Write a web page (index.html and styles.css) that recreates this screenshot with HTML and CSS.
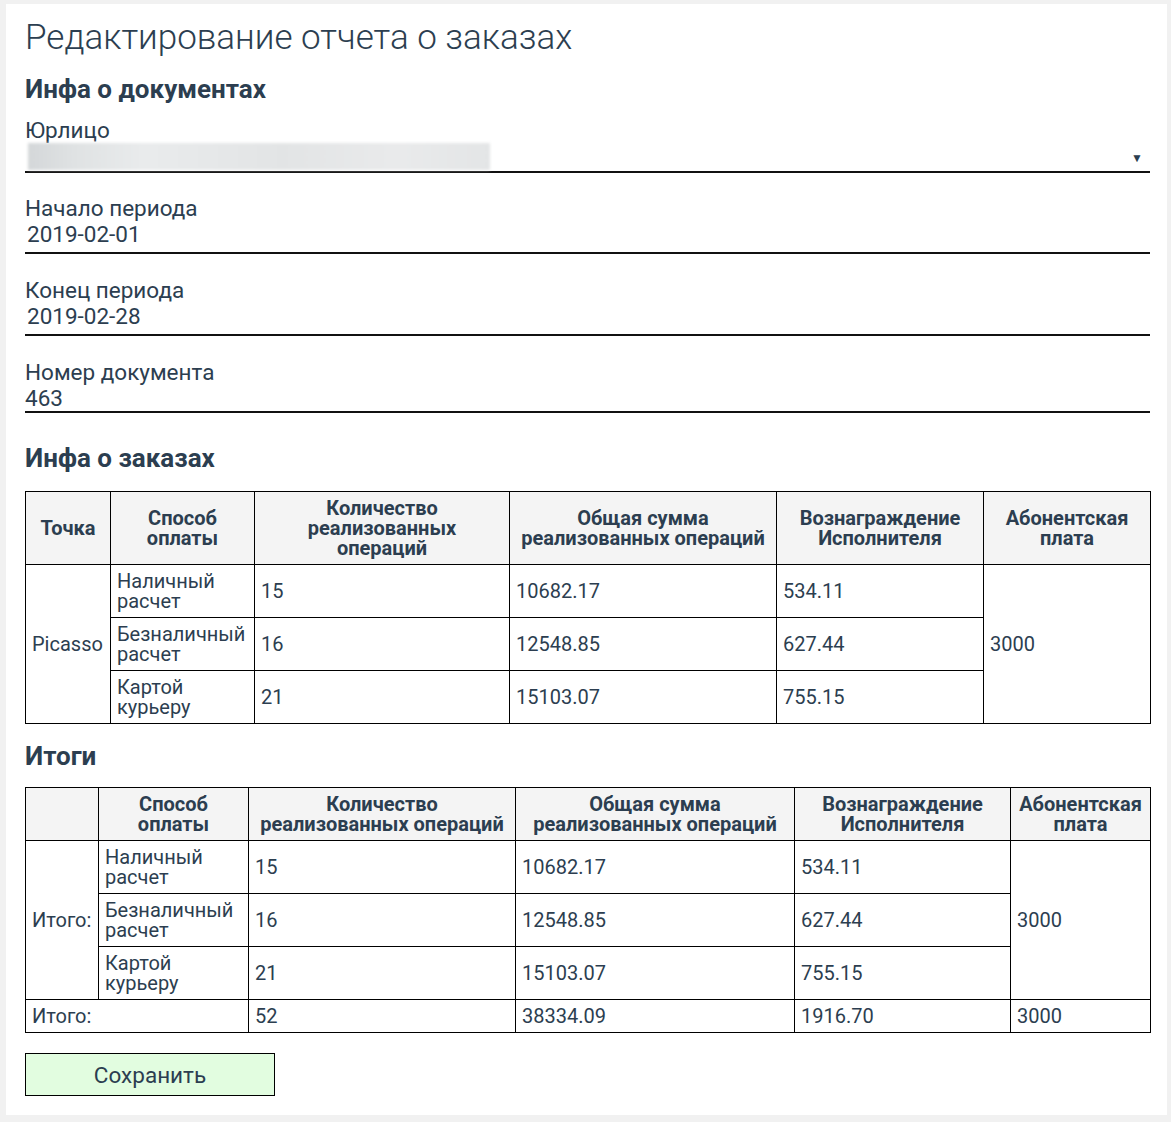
FILE: index.html
```html
<!DOCTYPE html>
<html lang="ru">
<head>
<meta charset="utf-8">
<title>Редактирование отчета о заказах</title>
<link rel="stylesheet" href="styles.css">
</head>
<body>
<div class="page">
  <h1 class="title">Редактирование отчета о заказах</h1>
  <h3 class="section section-docs">Инфа о документах</h3>

  <div class="field field-select">
    <div class="label">Юрлицо</div>
    <div class="select">
      <span class="blur"></span>
      <span class="arrow">▼</span>
    </div>
  </div>

  <div class="field field-start">
    <div class="label">Начало периода</div>
    <div class="input date">2019-02-01</div>
  </div>

  <div class="field field-end">
    <div class="label">Конец периода</div>
    <div class="input date">2019-02-28</div>
  </div>

  <div class="field field-number">
    <div class="label">Номер документа</div>
    <div class="input number">463</div>
  </div>

  <h3 class="section section-orders">Инфа о заказах</h3>
  <table class="grid">
    <colgroup>
      <col class="c1a"><col class="c1b"><col class="c1c"><col class="c1d"><col class="c1e"><col class="c1f">
    </colgroup>
    <thead>
      <tr>
        <th>Точка</th>
        <th>Способ оплаты</th>
        <th>Количество реализованных операций</th>
        <th>Общая сумма реализованных операций</th>
        <th>Вознаграждение Исполнителя</th>
        <th>Абонентская плата</th>
      </tr>
    </thead>
    <tbody>
      <tr>
        <td rowspan="3">Picasso</td>
        <td>Наличный расчет</td>
        <td>15</td>
        <td>10682.17</td>
        <td>534.11</td>
        <td rowspan="3">3000</td>
      </tr>
      <tr>
        <td>Безналичный расчет</td>
        <td>16</td>
        <td>12548.85</td>
        <td>627.44</td>
      </tr>
      <tr>
        <td>Картой курьеру</td>
        <td>21</td>
        <td>15103.07</td>
        <td>755.15</td>
      </tr>
    </tbody>
  </table>

  <h3 class="section section-totals">Итоги</h3>
  <table class="grid">
    <colgroup>
      <col class="c2a"><col class="c2b"><col class="c2c"><col class="c2d"><col class="c2e"><col class="c2f">
    </colgroup>
    <thead>
      <tr>
        <th></th>
        <th>Способ оплаты</th>
        <th>Количество реализованных операций</th>
        <th>Общая сумма реализованных операций</th>
        <th>Вознаграждение Исполнителя</th>
        <th>Абонентская плата</th>
      </tr>
    </thead>
    <tbody>
      <tr>
        <td rowspan="3">Итого:</td>
        <td>Наличный расчет</td>
        <td>15</td>
        <td>10682.17</td>
        <td>534.11</td>
        <td rowspan="3">3000</td>
      </tr>
      <tr>
        <td>Безналичный расчет</td>
        <td>16</td>
        <td>12548.85</td>
        <td>627.44</td>
      </tr>
      <tr>
        <td>Картой курьеру</td>
        <td>21</td>
        <td>15103.07</td>
        <td>755.15</td>
      </tr>
      <tr>
        <td colspan="2">Итого:</td>
        <td>52</td>
        <td>38334.09</td>
        <td>1916.70</td>
        <td>3000</td>
      </tr>
    </tbody>
  </table>

  <button class="save" type="button">Сохранить</button>
</div>
</body>
</html>
```

FILE: styles.css
```css
html, body {
  margin: 0;
  padding: 0;
}

body {
  background: #f1f1f1;
  font-family: Roboto, "Noto Sans", "Liberation Sans", sans-serif;
  color: #2c3e50;
  padding: 4px 4px 8px 6px;
}

.page {
  background: #ffffff;
  padding: 14px 17px 19px 19px;
}

.title {
  font-weight: 300;
  font-size: 35px;
  line-height: 40px;
  margin: 0;
}

.section {
  font-weight: 700;
  font-size: 26px;
  line-height: 30px;
  margin: 0;
}

.section-docs {
  margin-top: 16px;
}

.section-orders {
  margin-top: 30px;
  margin-bottom: 18px;
}

.section-totals {
  margin-top: 17px;
  margin-bottom: 16px;
}

.field-select { margin-top: 13px; }
.field-start { margin-top: 22px; }
.field-end { margin-top: 23px; }
.field-number { margin-top: 23px; }

.label {
  font-size: 22.5px;
  line-height: 26px;
}

.input {
  font-size: 22.5px;
  line-height: 26px;
  border-bottom: 2px solid #111;
}

.input.date {
  padding-left: 2px;
  padding-bottom: 5px;
}

.input.number {
  padding-bottom: 0;
}

.select {
  position: relative;
  height: 28px;
  border-bottom: 2px solid #111;
}

.blur {
  position: absolute;
  left: 3px;
  top: 0;
  width: 462px;
  height: 27px;
  background: linear-gradient(90deg, #d4d7d9 0%, #dfe2e3 10%, #e9ebec 25%, #e2e4e5 55%, #e9eaeb 80%, #e3e5e6 100%);
  filter: blur(1.5px);
}

.arrow {
  position: absolute;
  right: 7px;
  top: 9px;
  font-size: 12px;
  line-height: 12px;
  color: #2c3e50;
}

.grid {
  width: 100%;
  table-layout: fixed;
  border-collapse: collapse;
  font-size: 20px;
  line-height: 20px;
}

.grid th,
.grid td {
  border: 1px solid #000;
  padding: 6px;
  vertical-align: middle;
}

.grid th {
  background: #f4f4f4;
  font-weight: 700;
  text-align: center;
}

.grid td {
  text-align: left;
}

.c1a { width: 85px; }
.c1b { width: 144px; }
.c1c { width: 255px; }
.c1d { width: 267px; }
.c1e { width: 207px; }
.c1f { width: 167px; }

.c2a { width: 73px; }
.c2b { width: 150px; }
.c2c { width: 267px; }
.c2d { width: 279px; }
.c2e { width: 216px; }
.c2f { width: 140px; }

.save {
  display: block;
  margin-top: 20px;
  width: 250px;
  height: 43px;
  background: #e2fde0;
  border: 1px solid #000;
  font-family: Roboto, "Noto Sans", "Liberation Sans", sans-serif;
  font-size: 22.5px;
  color: #2c3e50;
  padding: 0;
  cursor: pointer;
}
```
